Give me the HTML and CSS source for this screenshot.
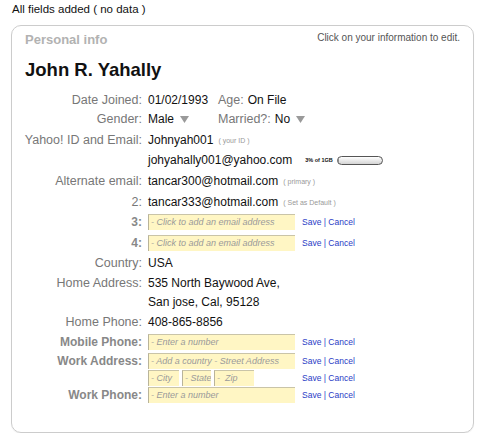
FILE: index.html
```html
<!DOCTYPE html>
<html lang="en">
<head>
  <meta charset="UTF-8">
  <meta name="viewport" content="width=device-width, initial-scale=1.0">
  <title>Personal info</title>
  <link rel="stylesheet" href="styles.css">
</head>
<body>
  <div class="status">All fields added ( no data )</div>

  <div class="card">
    <div class="card-head">
      <span class="title">Personal info</span>
      <span class="hint">Click on your information to edit.</span>
    </div>

    <h1 class="name">John R. Yahally</h1>

    <div class="rows">
      <div class="row h18">
        <span class="label">Date Joined:</span>
        <span class="value pair">
          <span class="first">01/02/1993</span>
          <span class="label inline">Age:</span> On File
        </span>
      </div>
      <div class="row">
        <span class="label">Gender:</span>
        <span class="value pair">
          <span class="first">Male <svg class="arrow" width="9" height="7" viewBox="0 0 9 7"><polygon points="0,0 9,0 4.5,7"/></svg></span>
          <span class="label inline">Married?:</span> No <svg class="arrow" width="9" height="7" viewBox="0 0 9 7"><polygon points="0,0 9,0 4.5,7"/></svg>
        </span>
      </div>
      <div class="row h21">
        <span class="label">Yahoo! ID and Email:</span>
        <span class="value">Johnyah001 <span class="note">( your ID )</span></span>
      </div>
      <div class="row">
        <span class="label"></span>
        <span class="value">johyahally001@yahoo.com
          <span class="quota">3% of 1GB</span>
          <span class="bar"><span class="bar-fill" style="width: 3%"></span></span>
        </span>
      </div>
      <div class="row h21">
        <span class="label">Alternate email:</span>
        <span class="value">tancar300@hotmail.com <span class="note">( primary )</span></span>
      </div>
      <div class="row h21">
        <span class="label">2:</span>
        <span class="value">tancar333@hotmail.com <span class="note">( Set as Default )</span></span>
      </div>
      <div class="row">
        <span class="label empty">3:</span>
        <span class="value edit">
          <span class="field wide">- Click to add an email address</span>
          <a class="actions" href="#">Save | Cancel</a>
        </span>
      </div>
      <div class="row h21">
        <span class="label empty">4:</span>
        <span class="value edit">
          <span class="field wide">- Click to add an email address</span>
          <a class="actions" href="#">Save | Cancel</a>
        </span>
      </div>
      <div class="row">
        <span class="label">Country:</span>
        <span class="value">USA</span>
      </div>
      <div class="row h19">
        <span class="label">Home Address:</span>
        <span class="value">535 North Baywood Ave,</span>
      </div>
      <div class="row h19">
        <span class="label"></span>
        <span class="value">San jose, Cal, 95128</span>
      </div>
      <div class="row h21">
        <span class="label">Home Phone:</span>
        <span class="value">408-865-8856</span>
      </div>
      <div class="row">
        <span class="label empty">Mobile Phone:</span>
        <span class="value edit">
          <span class="field wide">- Enter a number</span>
          <a class="actions" href="#">Save | Cancel</a>
        </span>
      </div>
      <div class="row h18">
        <span class="label empty">Work Address:</span>
        <span class="value edit">
          <span class="field wide">- Add a country - Street Address</span>
          <a class="actions" href="#">Save | Cancel</a>
        </span>
      </div>
      <div class="row h16">
        <span class="label"></span>
        <span class="value edit">
          <span class="field-group">
            <span class="field city">- City</span>
            <span class="field state">- State</span>
            <span class="field zip">-&nbsp; Zip</span>
          </span>
          <a class="actions" href="#">Save | Cancel</a>
        </span>
      </div>
      <div class="row h18">
        <span class="label empty">Work Phone:</span>
        <span class="value edit">
          <span class="field wide">- Enter a number</span>
          <a class="actions" href="#">Save | Cancel</a>
        </span>
      </div>
    </div>
  </div>
</body>
</html>
```

FILE: styles.css
```css
body {
  font-family: 'Liberation Sans', Arial, sans-serif;
  background: #ffffff;
  color: #111111;
  margin: 0;
  padding: 0;
}

.status {
  font-size: 11.5px;
  line-height: 13px;
  height: 22px;
  padding: 3px 0 0 12px;
}

.card {
  box-sizing: border-box;
  width: 463px;
  height: 408px;
  margin-left: 11px;
  border: 1px solid #cccccc;
  border-radius: 10px;
  box-shadow: 0 1px 1px rgba(0, 0, 0, 0.06);
}

.card-head {
  display: flex;
  justify-content: space-between;
  align-items: flex-start;
  padding: 6px 13px 0 13px;
}

.title {
  font-size: 13px;
  font-weight: bold;
  line-height: 16px;
  color: #b2b2b2;
}

.hint {
  font-size: 10px;
  line-height: 12px;
  color: #555555;
}

.name {
  font-size: 18.5px;
  line-height: 22px;
  font-weight: bold;
  margin: 11px 0 0 13px;
  color: #111111;
}

.rows {
  margin-top: 10px;
}

.row {
  display: grid;
  grid-template-columns: 130px 1fr;
  column-gap: 6px;
  align-items: center;
  height: 20px;
}

.row.h16 { height: 16px; }
.row.h18 { height: 18px; }
.row.h19 { height: 19px; }
.row.h21 { height: 21px; }

.label {
  text-align: right;
  font-size: 12.5px;
  color: #777777;
  white-space: nowrap;
}

.label.empty {
  font-size: 12px;
  font-weight: bold;
  color: #888888;
}

.label.inline {
  text-align: left;
}

.value {
  font-size: 12px;
  white-space: nowrap;
  display: flex;
  align-items: center;
}

.pair .first {
  display: inline-flex;
  align-items: center;
  width: 70px;
}

.pair .label.inline {
  margin-right: 4px;
}

.arrow {
  fill: #9a9a9a;
  margin-left: 7px;
}

.pair .arrow:last-child {
  margin-left: 6px;
}

.note {
  font-size: 7px;
  color: #999999;
  margin-left: 5px;
  padding-top: 2px;
}

.quota {
  font-size: 5.5px;
  font-weight: bold;
  margin-left: 13px;
}

.bar {
  display: inline-block;
  box-sizing: border-box;
  width: 46px;
  height: 9px;
  margin-left: 4px;
  border: 1px solid #555555;
  border-radius: 5px;
  background: linear-gradient(#ffffff, #d4d4d4);
  overflow: hidden;
}

.bar-fill {
  display: block;
  height: 100%;
  background: #888888;
}

.edit {
  gap: 7px;
}

.field {
  box-sizing: border-box;
  display: inline-block;
  height: 16px;
  line-height: 15px;
  padding-left: 2px;
  background: #fff6c4;
  border-top: 1px solid #c9c4a8;
  border-left: 1px solid #b9b49a;
  font-size: 9px;
  font-style: italic;
  color: #9a9a9a;
  overflow: hidden;
}

.field.wide {
  width: 147px;
}

.field-group {
  display: flex;
  gap: 3px;
  width: 147px;
}

.field.city { width: 31px; }
.field.state { width: 29px; }
.field.zip { width: 40px; }

.actions {
  font-size: 8.5px;
  color: #2a3cc6;
  text-decoration: none;
}
```
